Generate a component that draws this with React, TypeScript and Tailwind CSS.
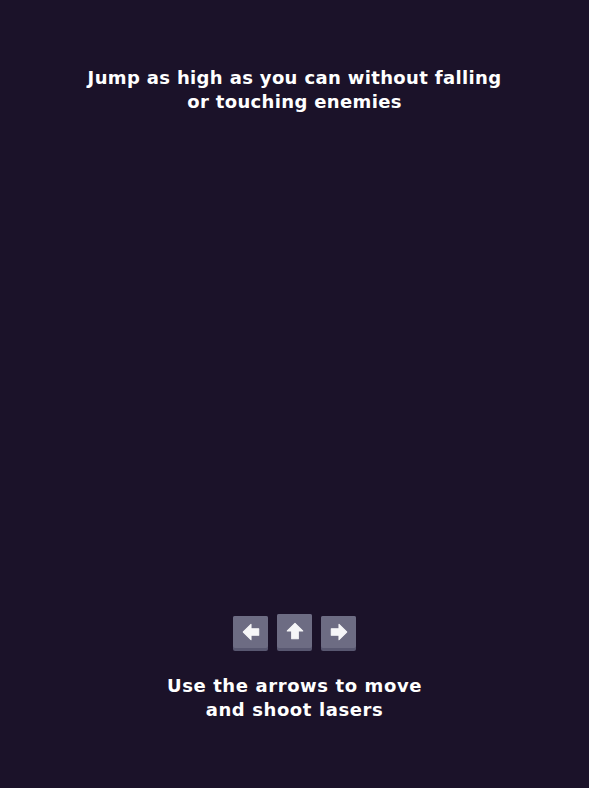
import React from "react";

function Key({ dir, raised }: { dir: "left" | "up" | "right"; raised?: boolean }) {
  const paths = {
    left: "M3 10 L10 3 L10 7 L17 7 L17 13 L10 13 L10 17 Z",
    up: "M10 3 L17 10 L13 10 L13 17 L7 17 L7 10 L3 10 Z",
    right: "M17 10 L10 3 L10 7 L3 7 L3 13 L10 13 L10 17 Z",
  };
  return (
    <div
      className={`w-[35px] ${raised ? "h-[37px]" : "h-[35px]"} rounded-[2px] bg-[#585770] flex flex-col`}
    >
      <div className="flex-1 mb-[3px] rounded-[2px] bg-[#6d6c83] flex items-center justify-center">
        <svg width="22" height="22" viewBox="0 0 20 20">
          <path d={paths[dir]} fill="#f6f6f8" stroke="#f6f6f8" strokeWidth="1" strokeLinejoin="round" />
        </svg>
      </div>
    </div>
  );
}

export default function App() {
  return (
    <div
      className="w-full h-[788px] bg-[#1b1229] text-white flex flex-col items-center"
      style={{ fontFamily: '"DejaVu Sans", sans-serif' }}
    >
      <p className="mt-[66px] text-center text-[18px] leading-[24px] font-bold tracking-[0.35px]">
        Jump as high as you can without falling
        <br />
        or touching enemies
      </p>

      <div className="flex-1" />

      <div className="flex items-end gap-[9px] mb-[23px]">
        <Key dir="left" />
        <Key dir="up" raised />
        <Key dir="right" />
      </div>

      <p className="mb-[66px] text-center text-[18px] leading-[24px] font-bold tracking-[0.6px]">
        Use the arrows to move
        <br />
        and shoot lasers
      </p>
    </div>
  );
}
